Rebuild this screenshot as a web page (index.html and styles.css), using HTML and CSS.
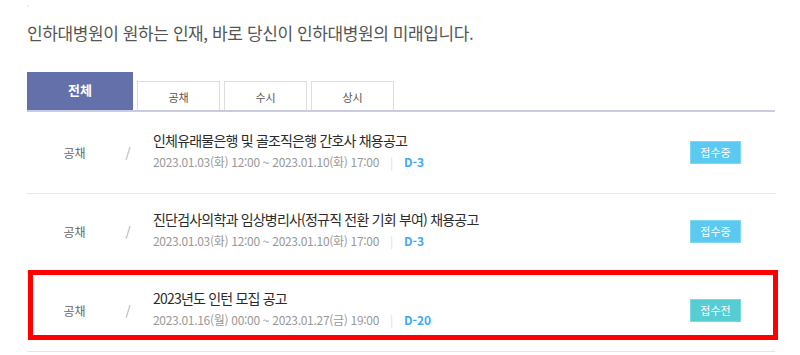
FILE: index.html
```html
<!DOCTYPE html>
<html lang="ko">
<head>
    <meta charset="UTF-8">
    <meta name="viewport" content="width=device-width, initial-scale=1.0">
    <title>채용공고</title>
    <link rel="stylesheet" href="styles.css">
</head>
<body>

    <div class="page">
        <span class="dot"></span>
        <h2 class="heading">인하대병원이 원하는 인재, 바로 당신이 인하대병원의 미래입니다.</h2>

        <!-- 채용구분 탭 -->
        <ul class="tabs">
            <li class="tab active">전체</li>
            <li class="tab">공채</li>
            <li class="tab">수시</li>
            <li class="tab">상시</li>
        </ul>

        <ul class="job-list">
            <li class="job">
                <span class="job-cat">공채</span>
                <span class="job-slash">/</span>
                <div class="job-info">
                    <p class="job-title">인체유래물은행 및 골조직은행 간호사 채용공고</p>
                    <p class="job-date">2023.01.03(화) 12:00 ~ 2023.01.10(화) 17:00<span class="bar">|</span><span class="dday">D-3</span></p>
                </div>
                <span class="state open">접수중</span>
            </li>
            <li class="job">
                <span class="job-cat">공채</span>
                <span class="job-slash">/</span>
                <div class="job-info">
                    <p class="job-title">진단검사의학과 임상병리사(정규직 전환 기회 부여) 채용공고</p>
                    <p class="job-date">2023.01.03(화) 12:00 ~ 2023.01.10(화) 17:00<span class="bar">|</span><span class="dday">D-3</span></p>
                </div>
                <span class="state open">접수중</span>
            </li>
            <li class="job">
                <span class="job-cat">공채</span>
                <span class="job-slash">/</span>
                <div class="job-info">
                    <p class="job-title">2023년도 인턴 모집 공고</p>
                    <p class="job-date">2023.01.16(월) 00:00 ~ 2023.01.27(금) 19:00<span class="bar">|</span><span class="dday">D-20</span></p>
                </div>
                <span class="state before">접수전</span>
                <!-- 강조 표시 -->
                <div class="highlight"></div>
            </li>
        </ul>
    </div>

</body>
</html>
```

FILE: styles.css
```css
body {
    margin: 0;
    padding: 0;
    background: #fff;
    font-family: "Noto Sans CJK KR", "Noto Sans", sans-serif;
    color: #333;
}

.page {
    width: 748px;
    padding: 5px 0 0 27px;
}

.dot {
    display: block;
    width: 2px;
    height: 2px;
    background-color: #eee;
}

.heading {
    margin: 13px 0 0;
    font-size: 17px;
    font-weight: 400;
    line-height: 26px;
    letter-spacing: -0.4px;
    color: #555;
}

.tabs {
    list-style: none;
    display: flex;
    align-items: flex-end;
    height: 38px;
    margin: 26px 0 0;
    padding: 0;
    border-bottom: 2px solid #c9cce0;
}

.tab {
    width: 81px;
    height: 28px;
    margin-left: 4px;
    border: 1px solid #ddd;
    border-bottom: none;
    font-size: 11px;
    line-height: 30px;
    text-align: center;
    color: #555;
}

.tab.active {
    width: 106px;
    height: 38px;
    margin-left: 0;
    border: none;
    background-color: #6470aa;
    color: #fff;
    font-size: 13px;
    font-weight: bold;
    line-height: 36px;
}

.job-list {
    list-style: none;
    margin: 0;
    padding: 3px 0 0;
}

.job {
    position: relative;
    display: flex;
    align-items: center;
    height: 74px;
    padding-bottom: 4px;
    border-bottom: 1px solid #e6e6e6;
}

.job-cat {
    width: 95px;
    font-size: 12px;
    text-align: center;
    color: #666;
}

.job-slash {
    width: 12px;
    font-size: 13px;
    text-align: center;
    color: #aaa;
}

.job-info {
    flex: 1;
    align-self: flex-start;
    padding-top: 15px;
    margin-left: 19px;
}

.job-title {
    margin: 0;
    font-size: 14px;
    line-height: 20px;
    letter-spacing: -0.8px;
    color: #2b2b2b;
}

.job-date {
    margin: 3px 0 0;
    font-size: 12px;
    line-height: 18px;
    letter-spacing: -0.3px;
    color: #999;
}

.bar {
    margin: 0 11px;
    color: #ddd;
}

.dday {
    color: #3fa9f5;
    font-weight: bold;
    letter-spacing: 0;
}

.state {
    width: 49px;
    height: 21px;
    margin-right: 34px;
    border: 1px solid #7fd6f5;
    background-color: #5bc9f0;
    color: #fff;
    font-size: 11px;
    line-height: 21px;
    text-align: center;
}

.state.before {
    border-color: #7cdade;
    background-color: #55cdd3;
}

.highlight {
    position: absolute;
    top: -3px;
    left: 1px;
    width: 750px;
    height: 70px;
    border: 5px solid #ff0000;
    box-sizing: border-box;
}
```
